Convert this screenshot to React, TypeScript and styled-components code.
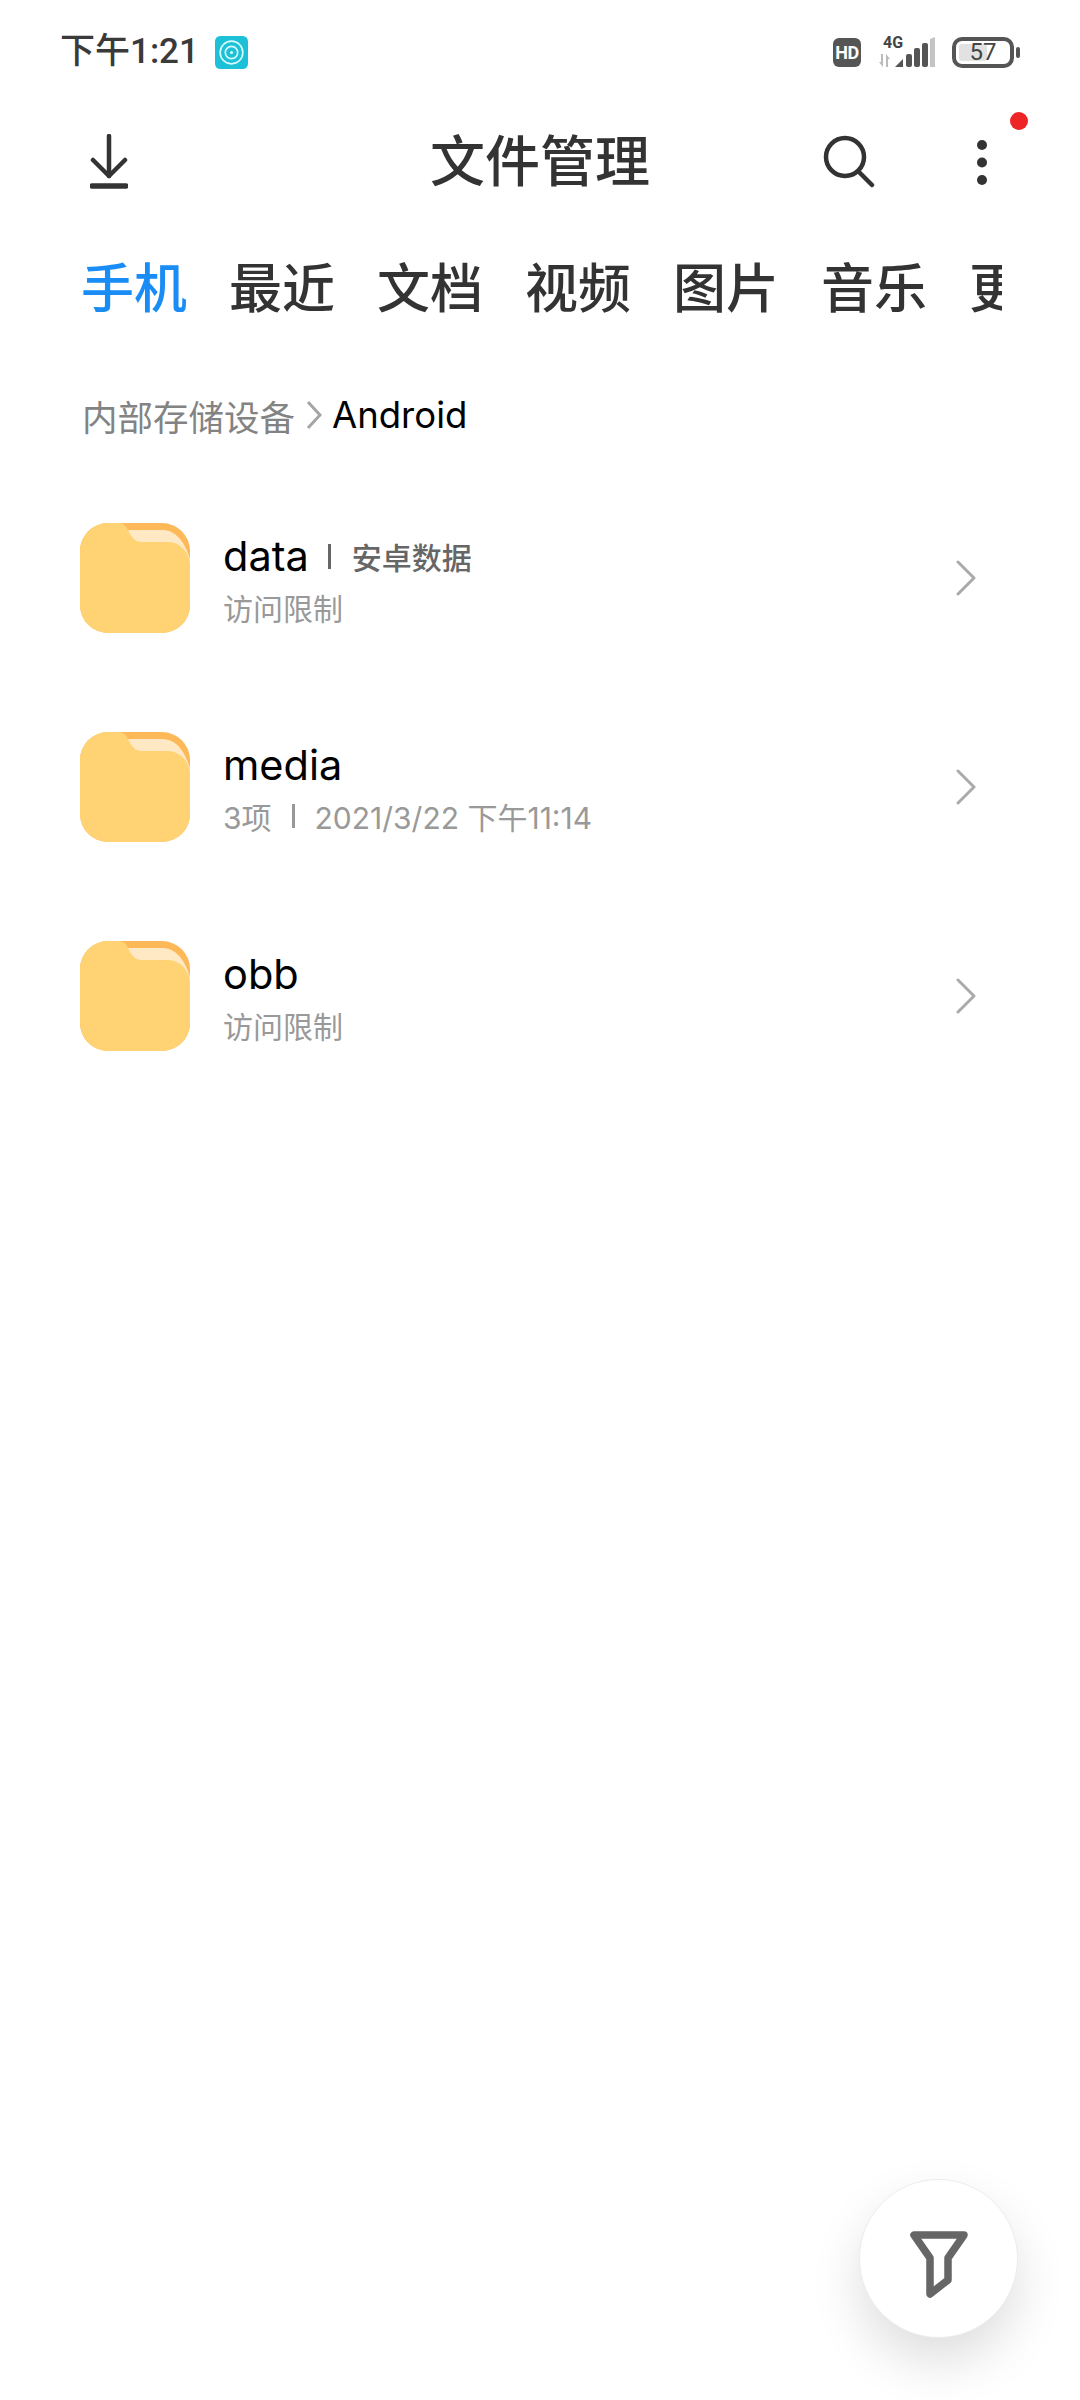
import React from "react";
import styled, { createGlobalStyle } from "styled-components";

const GlobalStyle = createGlobalStyle`
  html, body {
    margin: 0;
    padding: 0;
    background: #fff;
  }
  body {
    font-family: "Inter", "Noto Sans CJK SC", sans-serif;
  }
`;

const Page = styled.div`
  position: relative;
  width: 1080px;
  height: 2400px;
  overflow: hidden;
  background: #fff;
`;

const StatusBar = styled.div`
  display: flex;
  align-items: center;
  justify-content: space-between;
  height: 104px;
  padding: 0 66px 0 60px;
  box-sizing: border-box;
`;

const StatusLeft = styled.div`
  display: flex;
  align-items: center;
  gap: 16px;
`;

const StatusRight = styled.div`
  display: flex;
  align-items: center;
`;

const Clock = styled.span`
  font-family: "Roboto", "Noto Sans CJK SC", sans-serif;
  font-size: 35px;
  font-weight: 500;
  color: #3a3a3a;
  line-height: 40px;
`;

const HdBadge = styled.span`
  display: flex;
  align-items: center;
  justify-content: center;
  width: 28px;
  height: 29px;
  margin-right: 17px;
  border-radius: 6px;
  background: #555;
  color: #fff;
  font-family: "Roboto", sans-serif;
  font-size: 18px;
  font-weight: 700;
  letter-spacing: -0.5px;
`;

const SignalWrap = styled.div`
  position: relative;
  width: 58px;
  height: 30px;
  margin-right: 16px;
`;

const NetLabel = styled.span`
  position: absolute;
  left: 5px;
  top: -2px;
  font-family: "Roboto", sans-serif;
  font-size: 16px;
  font-weight: 700;
  line-height: 16px;
  color: #444;
`;

const Battery = styled.div`
  position: relative;
  display: flex;
  align-items: center;
  justify-content: center;
  width: 62px;
  height: 31px;
  box-sizing: border-box;
  border: 4px solid #555;
  border-radius: 10px;
  font-family: "Roboto", sans-serif;
  font-size: 24px;
  color: #444;
  &::after {
    content: "";
    position: absolute;
    right: -10px;
    top: 6px;
    width: 4px;
    height: 11px;
    border-radius: 2px;
    background: #555;
  }
`;

const BatteryFill = styled.div`
  position: absolute;
  left: 3px;
  top: 3px;
  bottom: 3px;
  border-radius: 3px;
  background: #e2e2e2;
`;

const BatteryText = styled.span`
  position: relative;
`;

const Header = styled.div`
  display: flex;
  align-items: center;
  height: 116px;
  padding: 0 0 0 88px;
`;

const IconButton = styled.div<{ $width: number; $gap?: number }>`
  position: relative;
  display: flex;
  align-items: center;
  justify-content: center;
  width: ${(p) => p.$width}px;
  height: 60px;
  margin-left: ${(p) => p.$gap ?? 0}px;
`;

const Title = styled.h1`
  width: 220px;
  margin: 0 172px 10px 300px;
  font-family: "Noto Sans CJK SC", sans-serif;
  font-size: 55px;
  font-weight: 500;
  line-height: 64px;
  white-space: nowrap;
  color: #333;
`;

const Badge = styled.span`
  position: absolute;
  right: -30px;
  top: -20px;
  width: 18px;
  height: 18px;
  border-radius: 50%;
  background: #ee2526;
`;

const Tabs = styled.div`
  display: flex;
  gap: 42px;
  margin: 30px 0 0 81px;
`;

const Tab = styled.span<{ $active?: boolean; $clipped?: boolean }>`
  flex: none;
  font-family: "Noto Sans CJK SC", sans-serif;
  font-size: 53px;
  font-weight: 500;
  line-height: 70px;
  white-space: nowrap;
  color: ${(p) => (p.$active ? "#1a8cf5" : "#333")};
  ${(p) => p.$clipped && "width: 33px; overflow: hidden;"}
`;

const Breadcrumb = styled.div`
  display: flex;
  align-items: center;
  height: 40px;
  margin: 75px 0 0 82px;
`;

const CrumbParent = styled.span`
  font-family: "Noto Sans CJK SC", sans-serif;
  font-size: 35.5px;
  color: #838383;
`;

const CrumbCurrent = styled.span`
  margin-left: 10px;
  font-size: 36.5px;
  color: #000;
`;

const CrumbArrow = styled.svg`
  margin-left: 11px;
`;

const List = styled.div`
  margin-top: 38px;
`;

const Row = styled.div`
  display: flex;
  align-items: center;
  height: 209px;
  padding: 0 102px 0 80px;
`;

const RowBody = styled.div`
  display: flex;
  flex-direction: column;
  flex: 1;
  gap: 7px;
  padding-top: 4px;
  margin-left: 33px;
`;

const NameLine = styled.div`
  display: flex;
  align-items: center;
  height: 48px;
`;

const Name = styled.span`
  font-size: 41.5px;
  color: #000;
`;

const Divider = styled.span`
  width: 3px;
  height: 25px;
  margin: 0 21px 0 19px;
  background: #666;
`;

const Tag = styled.span`
  font-family: "Noto Sans CJK SC", sans-serif;
  font-size: 30px;
  font-weight: 500;
  color: #666;
`;

const Sub = styled.div`
  display: flex;
  align-items: center;
  height: 40px;
  font-size: 30px;
  color: #999;
`;

const SubSep = styled.span`
  width: 3px;
  height: 24px;
  margin: 0 20px;
  background: #999;
`;

const Fab = styled.div`
  position: absolute;
  left: 859px;
  top: 2179px;
  display: flex;
  align-items: center;
  justify-content: center;
  width: 159px;
  height: 159px;
  box-sizing: border-box;
  border: 1px solid #ececec;
  border-radius: 50%;
  background: #fff;
  box-shadow: 0 24px 50px rgba(0, 0, 0, 0.13);
`;

const FilterIcon = styled.svg`
  margin-top: 13px;
`;

const FolderIcon = () => (
  <svg width="110" height="110" viewBox="0 0 110 110">
    <rect width="110" height="110" rx="28" fill="#fdb858" />
    <path d="M44 7H82C95 7 104 17 110 36V50H50Z" fill="#ffe9c4" />
    <path
      d="M28 0H38C46 0 47 5 50 11C53 16 56 19 62 19H88C100 19 110 30 110 42V82A28 28 0 0 1 82 110H28A28 28 0 0 1 0 82V28A28 28 0 0 1 28 0Z"
      fill="#ffd274"
    />
  </svg>
);

const Chevron = () => (
  <svg width="22" height="36" viewBox="0 0 22 36" fill="none">
    <path d="M2 2L18 18L2 34" stroke="#aaa" strokeWidth="3" strokeLinecap="round" strokeLinejoin="round" />
  </svg>
);

const folders = [
  { name: "data", tag: "安卓数据", sub: ["访问限制"] },
  { name: "media", sub: ["3项", "2021/3/22 下午11:14"] },
  { name: "obb", sub: ["访问限制"] },
];

const tabs = ["手机", "最近", "文档", "视频", "图片", "音乐", "更多"];

export default function App() {
  return (
    <Page>
      <GlobalStyle />
      <StatusBar>
        <StatusLeft>
          <Clock>下午1:21</Clock>
          <svg width="33" height="33" viewBox="0 0 32 32">
            <rect width="32" height="32" rx="5" fill="#1cc1d8" />
            <circle cx="16" cy="16" r="11" fill="none" stroke="#d8fbff" strokeWidth="1.6" />
            <circle cx="16" cy="16" r="6" fill="none" stroke="#d8fbff" strokeWidth="1.6" />
            <circle cx="16" cy="16" r="1.5" fill="#d8fbff" />
          </svg>
        </StatusLeft>
        <StatusRight>
          <HdBadge>HD</HdBadge>
          <SignalWrap>
            <NetLabel>4G</NetLabel>
            <svg width="58" height="30" viewBox="0 0 58 30">
              <path d="M5 17V30L1 25H3V17Z M8 17L12 22H10V30H8Z" fill="#bbb" />
              <path d="M17 30L25 22V30Z" fill="#555" />
              <rect x="28" y="17" width="6" height="13" rx="2" fill="#555" />
              <rect x="36" y="11" width="6" height="19" rx="2" fill="#555" />
              <rect x="44" y="6" width="6" height="24" rx="2" fill="#555" />
              <path d="M52 2L57 0V30H52Z" fill="#c4c4c4" />
            </svg>
          </SignalWrap>
          <Battery>
            <BatteryFill style={{ width: "52%" }} />
            <BatteryText>57</BatteryText>
          </Battery>
        </StatusRight>
      </StatusBar>

      <Header>
        <IconButton $width={42}>
          <svg width="38" height="56" viewBox="0 0 38 56" fill="none" stroke="#333" strokeLinecap="round" strokeLinejoin="round">
            <path d="M19 2V42" strokeWidth="4.5" />
            <path d="M3 26L19 42L35 26" strokeWidth="4.5" />
            <path d="M2 52H36" strokeWidth="5.5" />
          </svg>
        </IconButton>
        <Title>文件管理</Title>
        <IconButton $width={54}>
          <svg width="52" height="54" viewBox="0 0 52 54" fill="none" stroke="#333" strokeLinecap="round">
            <circle cx="22" cy="22" r="19" strokeWidth="4.5" />
            <path d="M36 37L49 50" strokeWidth="4.5" />
          </svg>
        </IconButton>
        <IconButton $width={32} $gap={90}>
          <svg width="12" height="47" viewBox="0 0 12 47" fill="#333">
            <circle cx="6" cy="6" r="5" />
            <circle cx="6" cy="23.5" r="5" />
            <circle cx="6" cy="41" r="5" />
          </svg>
          <Badge />
        </IconButton>
      </Header>

      <Tabs>
        {tabs.map((tab, index) => (
          <Tab key={tab} $active={index === 0} $clipped={index === tabs.length - 1}>
            {tab}
          </Tab>
        ))}
      </Tabs>

      <Breadcrumb>
        <CrumbParent>内部存储设备</CrumbParent>
        <CrumbArrow width="16" height="32" viewBox="0 0 16 32" fill="none">
          <path d="M2 3L14 16L2 29" stroke="#a5a5a5" strokeWidth="3" />
        </CrumbArrow>
        <CrumbCurrent>Android</CrumbCurrent>
      </Breadcrumb>

      <List>
        {folders.map((folder) => (
          <Row key={folder.name}>
            <FolderIcon />
            <RowBody>
              <NameLine>
                <Name>{folder.name}</Name>
                {folder.tag && (
                  <>
                    <Divider />
                    <Tag>{folder.tag}</Tag>
                  </>
                )}
              </NameLine>
              <Sub>
                {folder.sub.map((part, index) => (
                  <React.Fragment key={part}>
                    {index > 0 && <SubSep />}
                    <span>{part}</span>
                  </React.Fragment>
                ))}
              </Sub>
            </RowBody>
            <Chevron />
          </Row>
        ))}
      </List>

      <Fab>
        <FilterIcon width="58" height="68" viewBox="0 0 58 68" fill="none">
          <path d="M4 4H54L38 27V49L20 63V27Z" stroke="#666" strokeWidth="7.5" strokeLinejoin="round" />
        </FilterIcon>
      </Fab>
    </Page>
  );
}
